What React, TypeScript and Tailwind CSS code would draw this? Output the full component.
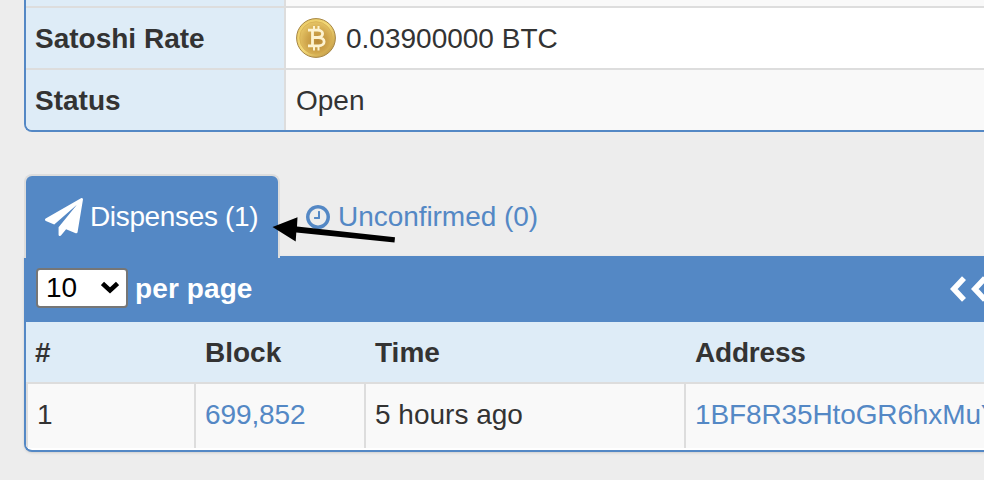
import type { ReactNode } from "react";

const DISPENSES = [{ id: 1, block: "699,852", time: "5 hours ago", address: "1BF8R35HtoGR6hxMuY" }];

function PaperPlaneIcon() {
  return (
    <svg className="w-[38px] h-[38px] shrink-0" viewBox="0 0 1792 1792" fill="currentColor">
      <path d="M1764 11q33 24 27 64l-256 1536q-5 29-32 45-14 8-31 8-11 0-24-5l-453-185-242 295q-18 23-49 23-13 0-22-4-19-7-30.5-23.5t-11.5-36.5v-349l864-1059-1069 925-395-162q-37-14-40-55-2-40 32-59l1664-960q15-9 32-9 20 0 36 11z" />
    </svg>
  );
}

function ClockIcon() {
  return (
    <svg className="w-7 h-7 shrink-0" viewBox="0 0 1792 1792" fill="currentColor">
      <path d="M1024 544v448q0 14-9 23t-23 9h-320q-14 0-23-9t-9-23v-64q0-14 9-23t23-9h224v-352q0-14 9-23t23-9h64q14 0 23 9t9 23zm416 352q0-148-73-273t-198-198-273-73-273 73-198 198-73 273 73 273 198 198 273 73 273-73 198-198 73-273zm224 0q0 209-103 385.5t-279.5 279.5-385.5 103-385.5-103-279.5-279.5-103-385.5 103-385.5 279.5-279.5 385.5-103 385.5 103 279.5 279.5 103 385.5z" />
    </svg>
  );
}

function BitcoinIcon() {
  return (
    <svg className="w-10 h-10 shrink-0" viewBox="0 0 40 40" fill="none">
      <defs>
        <linearGradient id="rim" x1="0" y1="0" x2="1" y2="1">
          <stop offset="0" stopColor="#e9c862" />
          <stop offset="0.5" stopColor="#f2d878" />
          <stop offset="1" stopColor="#b98c38" />
        </linearGradient>
        <radialGradient id="face" cx="0.55" cy="0.6" r="0.6">
          <stop offset="0" stopColor="#b88a38" />
          <stop offset="0.55" stopColor="#cfa54b" />
          <stop offset="1" stopColor="#e6c566" />
        </radialGradient>
      </defs>
      <circle cx="20" cy="20" r="19.4" fill="url(#rim)" stroke="#a58545" strokeWidth="1" />
      <circle cx="20" cy="20" r="16.300" fill="url(#face)" stroke="#d6ae50" strokeWidth="0.8" />
      <g stroke="#fdf3d0" strokeWidth="2.8">
        <path d="M12 12.200h9.500c6.800 0 6.800 7.300 0 7.300h-4.500M16.500 12.200v15.600M12 27.800h10.500c7.500 0 7.500-8.300 0-8.300h-1.500" />
        <path d="M18 8v4.500M22.500 8v4.500M18 27.500v5M22.500 27.500v5" strokeWidth="2" />
      </g>
    </svg>
  );
}

function InfoRow({ label, className, children }: { label: string; className: string; children: ReactNode }) {
  return (
    <div className="flex h-[62px] border-t-2 border-[#ddd]">
      <div className="w-[260px] shrink-0 flex items-center pl-[9px] pt-0.5 bg-[#deecf7] border-r-2 border-[#ddd] font-bold">
        {label}
      </div>
      <div className={`flex-1 flex items-center pl-2.5 ${className}`}>{children}</div>
    </div>
  );
}

export default function App() {
  return (
    <div className="relative w-[984px] h-[480px] overflow-hidden bg-[#ededed] pl-6 font-['Liberation_Sans',Arial,sans-serif] text-[28px] leading-10 text-[#333] whitespace-nowrap">
      {/* Dispenser details */}
      <div className="w-[1000px] h-[132px] overflow-hidden rounded-bl-lg border-l-2 border-b-2 border-[#5488c5]">
        <div className="flex h-1.5">
          <div className="w-[260px] bg-[#deecf7] border-r-2 border-[#ddd]" />
          <div className="flex-1 bg-[#f9f9f9]" />
        </div>
        <InfoRow label="Satoshi Rate" className="bg-white gap-2.5">
          <BitcoinIcon />
          <span className="pt-0.5">0.03900000 BTC</span>
        </InfoRow>
        <InfoRow label="Status" className="bg-[#f9f9f9] pt-0.5">
          Open
        </InfoRow>
      </div>

      {/* Tabs */}
      <div className="flex h-[82px] mt-[42px]">
        <div className="w-64 h-[84px] shrink-0 flex items-center gap-[7px] pl-[19px] pb-px rounded-t-lg border-2 border-b-0 border-[#ddd] bg-[#5488c5] text-white">
          <PaperPlaneIcon />
          <span className="tracking-[-0.35px]">Dispenses (1)</span>
        </div>
        <div className="flex items-center gap-1.5 pl-6 pt-1 text-[#5488c5]">
          <ClockIcon />
          <span className="tracking-[-0.05px]">Unconfirmed (0)</span>
        </div>
      </div>

      {/* Dispenses table */}
      <div className="w-[1000px] h-[196px] overflow-hidden rounded-bl-lg border-l-2 border-b-2 border-[#5488c5] bg-white shadow-sm">
        <div className="flex items-center h-[66px] pl-2.5 bg-[#5488c5] text-white">
          <button className="w-[92px] h-10 mb-0.5 flex items-center justify-between pl-2 pr-[7px] rounded border-2 border-[#767676] bg-white text-black">
            <span>10</span>
            <svg className="w-[18px] h-3.5" viewBox="0 0 18 14" fill="none" stroke="currentColor" strokeWidth="4.5">
              <path d="M1.500 2.500L9 9.500l7.500-7" />
            </svg>
          </button>
          <span className="w-[117px] ml-[7px] font-bold tracking-[0.1px]">per page</span>
          <svg className="ml-[698px] w-[50px] h-[26px] shrink-0" viewBox="0 0 50 26" fill="none" stroke="currentColor" strokeWidth="5.5">
            <path d="M14 2.200L3.800 13 14 23.800M35 2.200L24.800 13 35 23.800" />
          </svg>
        </div>
        <div className="grid grid-cols-[170px_170px_320px_1fr] items-center h-[62px] pt-0.5 bg-[#deecf7] border-b-2 border-[#ddd] font-bold *:pl-[9px]">
          <span>#</span>
          <span>Block</span>
          <span>Time</span>
          <span className="tracking-[-0.2px]">Address</span>
        </div>
        {DISPENSES.map((row) => (
          <div
            key={row.id}
            className="grid grid-cols-[168px_170px_320px_1fr] h-16 leading-[62px] bg-[#f9f9f9] *:border-l-2 *:border-[#ddd] *:pl-[9px]"
          >
            <span>{row.id}</span>
            <span className="text-[#5488c5] tracking-[-0.1px]">{row.block}</span>
            <span>{row.time}</span>
            <span className="text-[#5488c5] tracking-[-0.12px]">{row.address}</span>
          </div>
        ))}
      </div>

      {/* Arrow pointing at the active tab */}
      <svg className="absolute left-[272px] top-[214px] w-[124px] h-[30px]" viewBox="0 0 124 30">
        <path d="M0.500 13L25.500 3.200 25 12.500 123 23.200l-.5 5.300L24.300 18.500 23.700 27.500z" fill="#000" />
      </svg>
    </div>
  );
}
